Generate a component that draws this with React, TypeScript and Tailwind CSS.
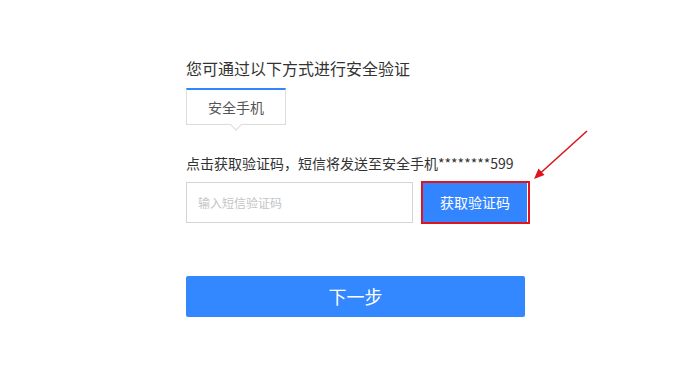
export default function App() {
  return (
    <div
      className="relative w-full h-[387px] bg-white text-[#333]"
      style={{ fontFamily: '"Noto Sans CJK SC", "Noto Sans", sans-serif' }}
    >
      <div className="ml-[186px] pt-[58px] w-[360px]">
        <h1 className="text-[16px] leading-[20px] text-[#333]">您可通过以下方式进行安全验证</h1>

        {/* tab */}
        <div className="mt-[10px] flex">
          <div className="relative w-[100px] h-[37px] border border-[#dcdcdc] border-t-2 border-t-[#3385ff] bg-white flex items-center justify-center text-[14px] text-[#555]">
            安全手机
            <span className="absolute left-1/2 -bottom-[5px] -translate-x-1/2 rotate-45 w-[8px] h-[8px] bg-white border-r border-b border-[#dcdcdc]" />
          </div>
        </div>

        <p className="mt-[28px] text-[14px] leading-[20px] text-[#333]">
          点击获取验证码，短信将发送至安全手机********599
        </p>

        <div className="mt-[9px] flex items-center">
          <input
            className="shrink-0 w-[227px] h-[41px] border border-[#d5d5d5] px-[11px] text-[12px] outline-none placeholder:text-[#c4c4c4]"
            placeholder="输入短信验证码"
          />
          <div className="relative ml-[10px] shrink-0">
            <button className="w-[104px] h-[41px] bg-[#3385ff] text-white text-[14px]">获取验证码</button>
            <span className="absolute -left-[2px] -top-[1px] w-[109px] h-[43px] border-2 border-[#e0141e]" />
          </div>
        </div>

        <button className="mt-[53px] w-[339px] h-[41px] rounded-[2px] bg-[#3388ff] text-white text-[18px]">
          下一步
        </button>
      </div>

      {/* red annotation arrow */}
      <svg className="absolute left-0 top-0" width="683" height="387" viewBox="0 0 683 387">
        <line x1="587" y1="131" x2="540" y2="173.5" stroke="#e0141e" strokeWidth="1.6" />
        <polygon points="534,179 544.5,175 538.5,168.5" fill="#e0141e" />
      </svg>
    </div>
  );
}
